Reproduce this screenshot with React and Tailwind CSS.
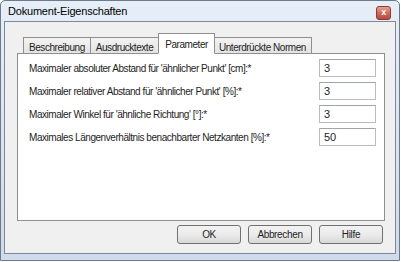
import React, { useState } from "react";

const tabs = ["Beschreibung", "Ausdrucktexte", "Parameter", "Unterdrückte Normen"];

const params = [
  { label: "Maximaler absoluter Abstand für 'ähnlicher Punkt' [cm]:*", value: "3" },
  { label: "Maximaler relativer Abstand für 'ähnlicher Punkt' [%]:*", value: "3" },
  { label: "Maximaler Winkel für 'ähnliche Richtung' [°]:*", value: "3" },
  { label: "Maximales Längenverhältnis benachbarter Netzkanten [%]:*", value: "50" },
];

const App = () => {
  const [active, setActive] = useState("Parameter");

  return (
    <div className="w-[401px] h-[262px] bg-white font-['Liberation_Sans',_Arial,_sans-serif] text-[10px] tracking-[-0.45px] text-[#1e1e1e]">
      <div className="w-[400px] h-[261px] flex flex-col rounded-t-[5px] border border-[#6d7a8a] bg-gradient-to-b from-[#e6eef8] via-[#dbe5f1] to-[#cfdbea]">
        {/* Title bar */}
        <div className="h-[19px] flex items-center justify-between pl-[7px] pr-[8px]">
          <span className="text-[11px] text-black tracking-[-0.2px] mt-[2px]">Dokument-Eigenschaften</span>
          <div className="w-[15px] h-[14px] mt-[4px] rounded-[3px] border border-[#8a3a34] bg-gradient-to-b from-[#e8a294] via-[#cf6a5c] to-[#b54a3c] flex items-center justify-center text-white text-[9px] font-bold leading-none">
            x
          </div>
        </div>

        {/* Client area */}
        <div className="mx-[3px] mt-[1px] h-[233px] border border-[#7d8998] bg-[#f0f0f0] flex flex-col pl-[12px] pr-[10px]">
          {/* Tabs */}
          <div className="flex items-end h-[31px] pl-[6px]">
            {tabs.map((t) => (
              <div
                key={t}
                onClick={() => setActive(t)}
                className={
                  t === active
                    ? "relative z-10 -mb-px h-[21px] px-[6px] pt-[3px] bg-white border border-[#8e8f8f] border-b-white -mx-[1px] cursor-default"
                    : "h-[16px] px-[5px] pt-[2px] bg-gradient-to-b from-[#f3f3f3] to-[#e3e3e3] border border-[#8e8f8f] border-b-0 border-l-0 first:border-l cursor-default"
                }
              >
                {t}
              </div>
            ))}
          </div>

          {/* Panel */}
          <div className="h-[168px] border border-[#8e8f8f] bg-white flex flex-col gap-[5px] pt-[5px] pl-[11px] pr-[8px]">
            {params.map((p) => (
              <div key={p.label} className="flex items-center justify-between h-[18px]">
                <span>{p.label}</span>
                <div className="w-[57px] h-[18px] border border-[#b9bcc2] border-t-[#9fa3aa] bg-white flex items-center pl-[4px] text-[11px] tracking-normal">
                  {p.value}
                </div>
              </div>
            ))}
          </div>

          {/* Buttons */}
          <div className="flex justify-end gap-[7px] mt-[4px] pr-[2px]">
            {["OK", "Abbrechen", "Hilfe"].map((b) => (
              <button
                key={b}
                className="w-[64px] h-[19px] rounded-[3px] border border-[#707070] bg-gradient-to-b from-[#f2f2f2] via-[#ebebeb] to-[#d8d8d8] text-[10px] tracking-[-0.35px] text-[#1e1e1e] leading-none"
              >
                {b}
              </button>
            ))}
          </div>
        </div>
      </div>
    </div>
  );
};

export default App;
